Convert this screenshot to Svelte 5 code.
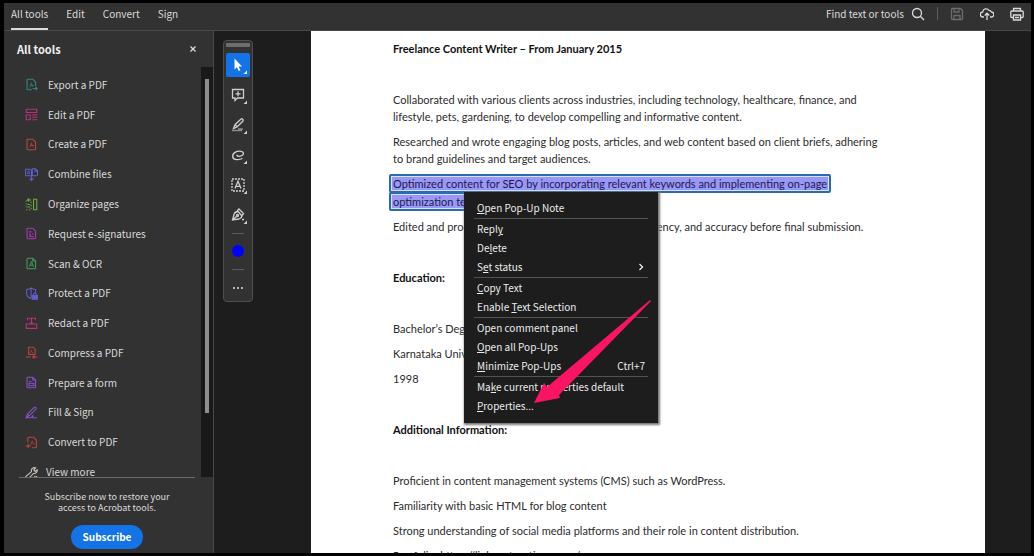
<script>
  const tabs = ['All tools', 'Edit', 'Convert', 'Sign'];

  const tools = [
    { icon: 'export', label: 'Export a PDF', color: '#2b8a86' },
    { icon: 'edit', label: 'Edit a PDF', color: '#b8327f' },
    { icon: 'create', label: 'Create a PDF', color: '#bd4444' },
    { icon: 'combine', label: 'Combine files', color: '#5f5fd0' },
    { icon: 'organize', label: 'Organize pages', color: '#6fae3e' },
    { icon: 'request', label: 'Request e-signatures', color: '#a53bb0' },
    { icon: 'scan', label: 'Scan & OCR', color: '#3f9d54' },
    { icon: 'protect', label: 'Protect a PDF', color: '#5f5fd0' },
    { icon: 'redact', label: 'Redact a PDF', color: '#b8327f' },
    { icon: 'compress', label: 'Compress a PDF', color: '#bd4444' },
    { icon: 'form', label: 'Prepare a form', color: '#8552c8' },
    { icon: 'sign', label: 'Fill & Sign', color: '#8552c8' },
    { icon: 'convert', label: 'Convert to PDF', color: '#bd4444' },
    { icon: 'more', label: 'View more', color: '#c8c8c8' }
  ];

  const quickTools = ['select', 'comment', 'highlight', 'draw', 'textbox', 'pen'];

  // "_" marks the letter that follows it as the access key
  const menu = [
    ['_Open Pop-Up Note'],
    ['Repl_y', 'De_lete', 'S_et status>'],
    ['_Copy Text', 'Enable _Text Selection'],
    ['Open comment panel', '_Open all Pop-Ups', '_Minimize Pop-Ups|Ctrl+7'],
    ['Ma_ke current properties default', '_Properties...']
  ].map((group) =>
    group.map((entry) => {
      const [text, shortcut] = entry.replace('>', '').split('|');
      const at = text.indexOf('_');
      return {
        before: at < 0 ? text : text.slice(0, at),
        key: at < 0 ? '' : text[at + 1],
        after: at < 0 ? '' : text.slice(at + 2),
        submenu: entry.endsWith('>'),
        shortcut
      };
    })
  );
</script>

{#snippet acrobat()}
  <path d="M5.5 11c1.500-1 2.500-3.500 2.400-5.500M8 7.500c.6 1.500 1.500 2.300 3 2.300M6.500 9.700c1.300-.6 2.500-.7 4-.2" stroke-width="1" />
{/snippet}

{#snippet sheet()}
  <path d="M3.500 1.500h6l3.500 3.500v8.500a1 1 0 0 1-1 1h-8.500a1 1 0 0 1-1-1v-11a1 1 0 0 1 1-1z" />
{/snippet}

{#snippet toolIcon(name)}
  <svg class="tool-icon" viewBox="0 0 16 16" aria-hidden="true">
    {#if name === 'export'}
      <path d="M8.500 14.500h-5a1 1 0 0 1-1-1v-11a1 1 0 0 1 1-1h6l3.500 3.500v5" />
      {@render acrobat()}
      <path d="M9.500 13h5.500M13 11l2 2-2 2" />
    {:else if name === 'edit'}
      <path d="M1.500 1.500h13v4h-13zM1.500 8.500h5v6h-5zM9 8.500h6M9 11.500h6M9 14.500h6" />
    {:else if name === 'create'}
      {@render sheet()}
      {@render acrobat()}
    {:else if name === 'combine'}
      <path d="M8 9.500H1.500a1 1 0 0 1-1-1v-7h6l1.500 1.500V9.500h6.500a1 1 0 0 0 1-1V3.500l-2.500-2.500h-4V9M12.500 1v3H15M8 9.500V15M5.500 12.800 8 15.300l2.500-2.500" />
      <path d="M2.500 7.500 4.500 3l1.500 4M2.800 6.500h3" stroke-width="1" />
    {:else if name === 'organize'}
      <path d="M10.500 1.500h4v13h-4z" />
      <path d="M1.500 3v1.500M1.500 6.500V8M1.500 10v1.500M1.500 14.500H3M5 14.500h1.500M7.500 12v1.500M7.500 8v2M7.500 4.500v1.800M3 8h3M3 11h3" />
      <path d="M7.500 2.500H3M5 .5 3 2.500l2 2" />
    {:else if name === 'request'}
      {@render sheet()}
      <path d="M5 6h3M5 8.500h1.500M8.500 8.500h2M5 12l1.500-2 1 2h3.500" />
    {:else if name === 'scan'}
      {@render sheet()}
      <path d="M5.500 12 8 5.500l2.500 6.500M6.300 10h3.400" stroke-width="1.200" />
      <path d="M9.500 1.500V5H13" />
    {:else if name === 'protect'}
      <path d="M7.500 14.500C4 13 2 11 2 8V3c2 0 4-.5 5.500-1.800C9 2.500 11 3 13 3v4M7.500 1.500v13" />
      <path d="M9 10.500h6.500V15H9z" fill="currentColor" />
      <path d="M10.500 10.500V9a1.700 1.700 0 0 1 3.400 0v1.500" />
    {:else if name === 'redact'}
      <path d="M3 4V1.500h10V4M8 1.500V7M1.500 8.500h13v5.500h-13zM6 7.500h4" />
    {:else if name === 'compress'}
      <path d="M4.500 10.500V1.500h5.500l2.500 2.500v6.500z" />
      <path d="M6 9c1.500-1 2.300-3 2.200-4.500M8 6.500c.5 1.200 1.300 2 2.500 2" stroke-width="1" />
      <path d="M1 13.500h6M15 13.500H9.500M11.500 11.500l-2 2 2 2M12 12.500v2" />
    {:else if name === 'form'}
      {@render sheet()}
      <path d="M9.500 1.500V5H13M5 6.500h3M5 9h6v3H5z" />
    {:else if name === 'sign'}
      <path d="M1.500 14.500 3 10l8-8a1.500 1.500 0 0 1 2.200 0 1.500 1.500 0 0 1 0 2.200l-8 8zM1.500 14.500h6l2-2.500v2.500h5M3 10l2.500 2.500" />
    {:else if name === 'convert'}
      <path d="M3.500 8V2.500a1 1 0 0 1 1-1h6l3.500 3.500v8.500a1 1 0 0 1-1 1H8.500" />
      <path d="M6.500 11c1.500-1 2.500-3.500 2.400-5.500M9 7.500c.6 1.500 1.500 2.300 3 2.300" stroke-width="1" />
      <path d="M4 9.500v5.500M1 12.300h6" />
    {:else}
      <path d="M1.500 12.500 8 7c-.8-2.500.8-5 3.500-5l1.500.3L10.800 5l1.700 1.700 2.500-2c.5 3-2 5-4.500 4.500l-6 6a1.900 1.900 0 0 1-3-2.700z" />
      <path d="M11.500 12.500l1.700 1.700 1.700-1.700" />
    {/if}
  </svg>
{/snippet}

<div class="window">
  <header class="topbar">
    <nav class="tabs">
      {#each tabs as tab, i}
        <button class="tab" class:active={i === 0}>{tab}</button>
      {/each}
    </nav>
    <div class="actions">
      <button class="find">
        Find text or tools
        <svg viewBox="0 0 14 14" width="14" height="14"><circle cx="6" cy="6" r="4.500" /><path d="M9.300 9.300 13 13" /></svg>
      </button>
      <span class="divider"></span>
      <button class="dim" aria-label="Save">
        <svg viewBox="0 0 14 14" width="14" height="14"><path d="M1.500 2.500a1 1 0 0 1 1-1h8l2 2v8a1 1 0 0 1-1 1h-9a1 1 0 0 1-1-1zM4 1.500v3.500h5V1.500M4 12.500V8.500h6v4" /></svg>
      </button>
      <button aria-label="Upload">
        <svg viewBox="0 0 14 14" width="14" height="14"><path d="M4 10H3a2.500 2.500 0 0 1-.3-5A3.500 3.500 0 0 1 9 3.300 3 3 0 0 1 11.500 5 2.500 2.500 0 0 1 11 10h-1M7 13V6.500M4.700 8.500 7 6.200l2.300 2.300" /></svg>
      </button>
      <button aria-label="Print">
        <svg viewBox="0 0 14 14" width="14" height="14"><path d="M3.500 4V1.500h7V4M3.500 10.500H1.800a1 1 0 0 1-1-1V5a1 1 0 0 1 1-1h10.400a1 1 0 0 1 1 1v4.500a1 1 0 0 1-1 1h-1.700M3.500 8h7v5h-7zM5 10.500h4" /></svg>
      </button>
    </div>
  </header>

  <div class="body">
    <aside class="sidebar">
      <div class="side-head">
        <h2>All tools</h2>
        <button aria-label="Close">
          <svg viewBox="0 0 8 8" width="8" height="8"><path d="M1.500 1.500l5 5M6.500 1.500l-5 5" /></svg>
        </button>
      </div>
      <div class="tool-area">
        <ul>
          {#each tools as tool}
            <li>
              <button class="tool" class:more={tool.icon === 'more'}>
                <span class="tint" style="color: {tool.color}">{@render toolIcon(tool.icon)}</span>
                {tool.label}
              </button>
            </li>
          {/each}
        </ul>
        <div class="track"><div class="thumb"></div></div>
      </div>
      <footer>
        <p>Subscribe now to restore your access to Acrobat tools.</p>
        <button class="subscribe">Subscribe</button>
      </footer>
    </aside>

    <main>
      <div class="quick">
        <span class="grip"></span>
        {#each quickTools as name, i}
          <button class="quick-tool" class:selected={i === 0} aria-label={name}>
            <svg viewBox="0 0 24 24" width="24" height="24">
              {#if name === 'select'}
                <path class="solid" d="M8.500 5.500v11l2.500-2.200 1.700 3.700 1.700-.8-1.700-3.600h3.300z" />
              {:else if name === 'comment'}
                <path d="M6.500 6.500h11v8.500h-6l-2.500 2.500V15H6.500zM12 8.300v5M9.500 10.800h5" />
              {:else if name === 'highlight'}
                <path d="M7.500 15.500l1.500-3.800 6-5.700c1.200-.7 2.700.7 2 2l-6 6zM9 11.700l2.300 2.300" />
                <path class="bar" d="M6 17.500h10M12 16h5" />
              {:else if name === 'draw'}
                <path d="M16.500 15.500c-3 1.500-9 1.800-9.800-1.500C6 10 11 7.500 15 8.300c3 .6 3.300 3 1 4.200-2 1-4.500.8-5.500-.5" />
              {:else if name === 'textbox'}
                <rect class="dashed" x="6" y="6" width="12" height="12" />
                <path d="M9 15.500 12 8.200l3 7.300M10 13.300h4" />
              {:else}
                <path d="M6.500 17 8 11.500c.5-2 2-3 4-3l4 4.500c-.3 1.500-1.500 2.500-3 3zM6.500 17l4.500-4M11 8l2-2 4.500 4.500-1.500 2M16 16.500h2" />
                <circle cx="11.500" cy="12.500" r="1" />
              {/if}
              <path class="corner" d="M21 17.500v3.500h-3.500z" />
            </svg>
          </button>
        {/each}
        <hr />
        <button class="swatch" aria-label="Colour"></button>
        <hr />
        <button class="dots" aria-label="More"><i></i><i></i><i></i></button>
      </div>

      <article class="page">
        <h3>Freelance Content Writer – From January 2015</h3>
        <p>
          Collaborated with various clients across industries, including technology, healthcare, finance, and<br />
          lifestyle, pets, gardening, to develop compelling and informative content.
        </p>
        <p>
          Researched and wrote engaging blog posts, articles, and web content based on client briefs, adhering<br />
          to brand guidelines and target audiences.
        </p>
        <p>
          <mark>Optimized content for SEO by incorporating relevant keywords and implementing on-page</mark>
          <mark>optimization techniques.</mark>
        </p>
        <p>Edited and proofread content to ensure quality, consistency, and accuracy before final submission.</p>
        <h3>Education:</h3>
        <p>Bachelor’s Degree in Commerce</p>
        <p>Karnataka University</p>
        <p>1998</p>
        <h3>Additional Information:</h3>
        <p>Proficient in content management systems (CMS) such as WordPress.</p>
        <p>Familiarity with basic HTML for blog content</p>
        <p>Strong understanding of social media platforms and their role in content distribution.</p>
        <p>Portfolio: https://linkupstorytines.com/</p>

        <div class="menu" role="menu">
          {#each menu as group}
            <div class="group">
              {#each group as item}
                <button role="menuitem">
                  <span>{item.before}<u>{item.key}</u>{item.after}</span>
                  {#if item.shortcut}<span>{item.shortcut}</span>{/if}
                  {#if item.submenu}
                    <svg viewBox="0 0 8 8" width="8" height="8"><path d="M2.500 1l3 3-3 3" /></svg>
                  {/if}
                </button>
              {/each}
            </div>
          {/each}
          <svg class="arrow" viewBox="0 0 120 106" width="120" height="106">
            <path d="M1 103 11 83l3 4L117 0l1 1L27 94l-1 1 1 3z" />
          </svg>
        </div>
      </article>
    </main>
  </div>
</div>

<style>
  :global(body) {
    margin: 0;
    background: #000;
  }

  .window {
    display: flex;
    flex-direction: column;
    height: 100vh;
    box-sizing: border-box;
    border: solid #000;
    border-width: 3px 3px 3px 4px;
    overflow: hidden;
    background: #1d1d1d;
    color: #dadada;
    font: 10px/14px 'Noto Sans CJK SC', sans-serif;
  }

  button {
    margin: 0;
    padding: 0;
    border: 0;
    background: none;
    color: inherit;
    font: inherit;
    text-align: left;
    white-space: nowrap;
  }

  svg {
    display: block;
    flex: none;
    fill: none;
    stroke: currentColor;
    stroke-width: 1.3;
  }

  .topbar {
    display: flex;
    flex: none;
    justify-content: space-between;
    height: 28px;
    box-sizing: border-box;
    border-bottom: 1px solid #484848;
    background: #323232;
  }

  .tabs {
    display: flex;
    gap: 18px;
    padding-left: 7px;
  }

  .tab {
    padding-bottom: 4px;
    border-bottom: 2px solid transparent;
  }

  .tab.active {
    border-color: #dadada;
  }

  .actions {
    display: flex;
    align-items: center;
    gap: 16px;
    padding: 0 7px 6px 0;
  }

  .find {
    display: flex;
    align-items: center;
    gap: 7px;
  }

  .divider {
    width: 1px;
    height: 13px;
    margin: 0 -4px;
    background: #5c5c5c;
  }

  .dim {
    color: #6c6c6c;
  }

  .body {
    display: flex;
    flex: 1;
    min-height: 0;
  }

  .sidebar {
    display: flex;
    flex: none;
    flex-direction: column;
    width: 210px;
    box-sizing: border-box;
    border-right: 1px solid #4a4a4a;
    background: #323232;
  }

  .side-head {
    display: flex;
    align-items: center;
    justify-content: space-between;
    height: 36px;
    padding: 0 16px 0 13px;
  }

  h2 {
    margin: 0;
    color: #f0f0f0;
    font-size: 11px;
  }

  .tool-area {
    display: flex;
    flex: 1;
    min-height: 0;
    overflow: hidden;
  }

  ul {
    display: flex;
    flex: 1;
    flex-direction: column;
    height: calc(100% + 10px);
    box-sizing: border-box;
    margin: 0;
    padding: 3px 0 0 21px;
    list-style: none;
  }

  li {
    display: flex;
    flex: 1;
    align-items: center;
  }

  .tool {
    display: flex;
    align-items: center;
    gap: 10px;
  }

  .more {
    gap: 8px;
  }

  .tool-icon {
    width: 13px;
    height: 13px;
  }

  .track {
    width: 12px;
    box-sizing: border-box;
    padding: 12px 4px 0;
    background: #191919;
  }

  .thumb {
    height: 87%;
    background: #8f8f8f;
    width: 4px;
    height: 84%;
  }

  footer {
    display: flex;
    flex-direction: column;
    align-items: center;
    gap: 12px;
    margin: 0 18px 0 15px;
    padding: 13px 0 4px;
    border-top: 1px solid #6a6a6a;
  }

  footer p {
    width: 150px;
    margin: 0;
    font-size: 9px;
    line-height: 11px;
    text-align: center;
  }

  .subscribe {
    height: 24px;
    padding: 0 12px;
    border-radius: 12px;
    background: #1473e6;
    color: #fff;
    font-weight: bold;
  }

  main {
    display: flex;
    flex: 1;
    align-items: flex-start;
    min-width: 0;
    padding: 0 46px 0 9px;
    overflow: hidden;
  }

  .quick {
    display: flex;
    flex: none;
    flex-direction: column;
    align-items: center;
    gap: 6px;
    width: 30px;
    height: 262px;
    box-sizing: border-box;
    margin: 9px 58px 0 0;
    padding-top: 2px;
    border: 1px solid #4f4f4f;
    border-radius: 4px;
    background: #323232;
  }

  .grip {
    flex: none;
    width: 24px;
    height: 4px;
    border-radius: 1px;
    background: #6e6e6e;
  }

  .quick-tool {
    border-radius: 2px;
    color: #cfcfcf;
  }

  .selected {
    background: #1473e6;
    color: #fff;
  }

  .solid,
  .corner {
    fill: currentColor;
    stroke: none;
  }

  .bar {
    stroke: #8a8a8a;
  }

  .dashed {
    stroke-dasharray: 2 1;
  }

  .quick hr {
    width: 12px;
    height: 1px;
    margin: 0 0 5px;
    border: 0;
    background: #5c5c5c;
  }

  .swatch {
    width: 12px;
    height: 12px;
    margin-bottom: 6px;
    border-radius: 50%;
    background: #0000ff;
  }

  .dots {
    display: flex;
    gap: 2px;
    margin-top: 6px;
  }

  .dots i {
    width: 2px;
    height: 2px;
    background: #b5b5b5;
  }

  .page {
    position: relative;
    flex: 1;
    min-width: 0;
    padding: 9px 40px 20px 82px;
    background: #fff;
    color: #2c2c2c;
    font: 11px/17px Lato, sans-serif;
    white-space: nowrap;
  }

  .page h3 {
    margin: 0 0 34px;
    color: #111;
    font-size: 11px;
  }

  .page p {
    margin: 0 0 8px;
  }

  .page p + h3 {
    margin-top: 34px;
  }

  mark {
    display: block;
    width: fit-content;
    margin: -1px 0 -1px -4px;
    padding: 1px 2px;
    border: 2px solid #2a6cb4;
    border-radius: 2px;
    background: #9a98f4;
    box-shadow: inset 0 0 0 1px #d5e3fa;
    color: #1b1a55;
    line-height: 13px;
  }

  .menu {
    position: absolute;
    top: 161px;
    left: 153px;
    width: 194px;
    box-sizing: border-box;
    padding: 6px 10px 8px;
    background: #1d1d1d;
    box-shadow: 1px 1px 2px 1px #777;
    color: #ececec;
    font: 10px/19px 'Noto Sans CJK SC', sans-serif;
  }

  .group + .group {
    margin-top: 1px;
    border-top: 1px solid #525252;
  }

  .menu button {
    display: flex;
    align-items: center;
    justify-content: space-between;
    width: 100%;
    padding: 0 3px;
  }

  .arrow {
    position: absolute;
    top: 108px;
    left: 69px;
  }

  .arrow path {
    fill: #fa1464;
    stroke: none;
  }
</style>
